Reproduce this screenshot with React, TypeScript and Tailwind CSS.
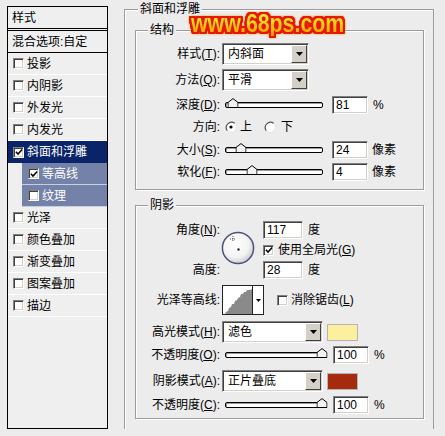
import React from "react";

const effects = [
  { name: "投影" },
  { name: "内阴影" },
  { name: "外发光" },
  { name: "内发光" },
  { name: "斜面和浮雕", on: true, active: true },
  { name: "等高线", on: true, sub: true },
  { name: "纹理", sub: true },
  { name: "光泽" },
  { name: "颜色叠加" },
  { name: "渐变叠加" },
  { name: "图案叠加" },
  { name: "描边" },
];

const sunken =
  "border border-[#808080] border-b-white border-r-white shadow-[inset_1px_1px_0_#404040,inset_-1px_-1px_0_#d4d0c8]";

function Key({ k }: { k: string }) {
  return <span className="underline decoration-1 underline-offset-[1px]">{k}</span>;
}

function Lbl({ name, k }: { name: string; k?: string }) {
  return (
    <span className="w-[84px] shrink-0 text-right whitespace-nowrap">
      {name}
      {k ? (
        <>
          (<Key k={k} />)
        </>
      ) : null}
      :
    </span>
  );
}

function Check({ on = false }: { on?: boolean }) {
  return (
    <span className={`flex h-[11px] w-[11px] shrink-0 items-center justify-center bg-white ${sunken}`}>
      {on && (
        <svg viewBox="0 0 9 9" className="h-[8px] w-[8px]">
          <path d="M1 4.2 L3.4 6.8 L8 1.6" stroke="#000" strokeWidth="1.7" fill="none" />
        </svg>
      )}
    </span>
  );
}

function Radio({ on = false }: { on?: boolean }) {
  return (
    <svg viewBox="0 0 12 12" className="h-[12px] w-[12px] shrink-0">
      <circle cx="6" cy="6" r="5.3" fill="#fff" stroke="#e6e6e6" />
      <path d="M2.3 9.7 A5.3 5.3 0 0 1 9.7 2.3" stroke="#555" strokeWidth="1.2" fill="none" />
      {on && <circle cx="6" cy="6" r="1.6" fill="#000" />}
    </svg>
  );
}

function Select({ value, wide = false }: { value: string; wide?: boolean }) {
  return (
    <div className={`ml-[2px] flex h-[22px] items-center bg-white ${sunken} ${wide ? "w-[101px]" : "w-[87px]"}`}>
      <span className="flex-1 pl-[5px]">{value}</span>
      <span className="mr-[1px] flex h-[18px] w-[16px] items-center justify-center border border-white border-b-[#404040] border-r-[#404040] bg-[#d4d0c8]">
        <svg viewBox="0 0 7 4" className="h-[4px] w-[7px]">
          <path d="M0 0 H7 L3.5 4 Z" fill="#000" />
        </svg>
      </span>
    </div>
  );
}

function Slider({ value }: { value: number }) {
  return (
    <div className="relative ml-[5px] h-[6px] w-[98px] shrink-0 rounded-[2px] border border-black bg-white shadow-[inset_1px_1px_0_#9a9a9a]">
      <svg
        viewBox="0 0 11 10"
        className="absolute top-[-5px] h-[10px] w-[11px] -translate-x-1/2"
        style={{ left: `${value}%` }}
      >
        <path d="M0.5 9.5 V4.5 L5.5 0.6 L10.5 4.5 V9.5 Z" fill="#f2f2f2" stroke="#000" />
      </svg>
    </div>
  );
}

function Field({ value, className = "" }: { value: string; className?: string }) {
  return (
    <span className={`flex h-[18px] items-center bg-white pl-[3px] ${sunken} ${className}`}>{value}</span>
  );
}

function Group({
  title,
  className,
  children,
}: {
  title: string;
  className: string;
  children: React.ReactNode;
}) {
  return (
    <div
      className={`relative flex flex-col border border-[#9c9c9c] shadow-[inset_1px_1px_0_#fff,1px_1px_0_#fff] ${className}`}
    >
      <span className="absolute left-[12px] top-[-8px] h-[14px] bg-[#ececec] px-[2px] leading-[14px]">{title}</span>
      {children}
    </div>
  );
}

function Dial() {
  return (
    <svg viewBox="0 0 34 34" className="ml-[1px] mt-[10px] h-[34px] w-[34px] shrink-0">
      <defs>
        <radialGradient id="dialFill" cx="42%" cy="38%" r="65%">
          <stop offset="0" stopColor="#ffffff" />
          <stop offset="0.65" stopColor="#f3f3f3" />
          <stop offset="1" stopColor="#c9c9cf" />
        </radialGradient>
      </defs>
      <circle cx="17" cy="17" r="15.6" fill="url(#dialFill)" stroke="#48527a" strokeWidth="1.5" />
      <path d="M12 5 V11 M9 8 H15" stroke="#000" strokeWidth="0.7" strokeDasharray="1 1" />
      <rect x="16.5" y="17.5" width="2" height="2" fill="#000" />
    </svg>
  );
}

function Contour() {
  return (
    <div className="ml-[2px] flex h-[30px] w-[42px] shrink-0 border border-[#222] bg-white">
      <svg viewBox="0 0 29 28" className="h-[28px] w-[29px]">
        <path
          d="M2 28 L3 26 L5 25 L6 22 L8 21 L9 18 L11 18 L12 15 L14 14 L15 12 L17 11 L18 8 L20 8 L21 6 L23 6 L24 4 L27 4 L29 3 V28 Z"
          fill="#8a8a8a"
        />
      </svg>
      <span className="flex flex-1 items-center justify-center border-l border-[#222]">
        <svg viewBox="0 0 5 3" className="h-[3px] w-[5px]">
          <path d="M0 0 H5 L2.5 3 Z" fill="#000" />
        </svg>
      </span>
    </div>
  );
}

function StylesList() {
  return (
    <div className="flex h-[423px] w-[101px] shrink-0 flex-col border border-black bg-[#efefef]">
      <div className="flex h-[24px] items-center border-b-[3px] border-double border-black pl-[4px]">样式</div>
      <div className="flex h-[22px] items-center border-b border-black pl-[4px]">混合选项:自定</div>
      {effects.map((e) =>
        e.sub ? (
          <div key={e.name} className="pl-[14px]">
            <div className="flex h-[22px] items-center gap-[3px] border-b border-[#c9cde0] bg-[#7481a9] pl-[6px] text-white">
              <Check on={e.on} />
              <span>{e.name}</span>
            </div>
          </div>
        ) : (
          <div
            key={e.name}
            className={`flex h-[22px] items-center gap-[3px] pl-[5px] ${
              e.active ? "bg-[#0a246a] text-white" : "border-b border-white"
            }`}
          >
            <Check on={e.on} />
            <span>{e.name}</span>
          </div>
        )
      )}
    </div>
  );
}

function BevelPanel() {
  return (
    <div className="relative mt-[3px] flex h-[420px] w-[310px] shrink-0 flex-col border border-b-0 border-[#9c9c9c] pl-[10px] pr-[9px] pt-[20px] shadow-[inset_1px_1px_0_#fff]">
      <span className="absolute left-[13px] top-[-8px] h-[14px] bg-[#ececec] px-[2px] leading-[14px]">斜面和浮雕</span>

      <Group title="结构" className="h-[160px] pt-[12px]">
        <div className="flex h-[22px] items-center">
          <Lbl name="样式" k="T" />
          <Select value="内斜面" />
        </div>
        <div className="mt-[4px] flex h-[22px] items-center">
          <Lbl name="方法" k="Q" />
          <Select value="平滑" />
        </div>
        <div className="mt-[3px] flex h-[22px] items-center">
          <Lbl name="深度" k="D" />
          <Slider value={7} />
          <Field value="81" className="ml-[9px] w-[36px]" />
          <span className="ml-[5px]">%</span>
        </div>
        <div className="flex h-[22px] items-center">
          <Lbl name="方向" />
          <span className="ml-[5px] flex items-center">
            <Radio on />
            <span className="ml-[3px]">上</span>
          </span>
          <span className="ml-[12px] flex items-center">
            <Radio />
            <span className="ml-[5px]">下</span>
          </span>
        </div>
        <div className="mt-[1px] flex h-[22px] items-center">
          <Lbl name="大小" k="S" />
          <Slider value={16} />
          <Field value="24" className="ml-[9px] w-[36px]" />
          <span className="ml-[4px]">像素</span>
        </div>
        <div className="flex h-[22px] items-center">
          <Lbl name="软化" k="F" />
          <Slider value={27} />
          <Field value="4" className="ml-[9px] w-[36px]" />
          <span className="ml-[4px]">像素</span>
        </div>
      </Group>

      <Group title="阴影" className="mt-[15px] h-[214px] pt-[15px]">
        <div className="flex">
          <div className="flex h-[56px] w-[84px] shrink-0 flex-col items-end justify-between pb-[1px] pt-[3px]">
            <span>
              角度(<Key k="N" />):
            </span>
            <span>高度:</span>
          </div>
          <Dial />
          <div className="ml-[8px] flex flex-col">
            <div className="flex items-center">
              <Field value="117" className="h-[17px] w-[40px]" />
              <span className="ml-[5px]">度</span>
            </div>
            <div className="flex h-[22px] items-center">
              <Check on />
              <span className="ml-[4px]">
                使用全局光(<Key k="G" />)
              </span>
            </div>
            <div className="flex items-center">
              <Field value="28" className="h-[17px] w-[40px]" />
              <span className="ml-[5px]">度</span>
            </div>
          </div>
        </div>
        <div className="mt-[6px] flex h-[30px] items-center">
          <Lbl name="光泽等高线" />
          <Contour />
          <span className="ml-[13px] flex items-center">
            <Check />
            <span className="ml-[3px]">
              消除锯齿(<Key k="L" />)
            </span>
          </span>
        </div>
        <div className="mt-[6px] flex h-[22px] items-center">
          <Lbl name="高光模式" k="H" />
          <Select value="滤色" wide />
          <span className="ml-[4px] h-[17px] w-[31px] border border-[#b5b5b5] bg-[#fcf0a0]" />
        </div>
        <div className="mt-[1px] flex h-[22px] items-center">
          <Lbl name="不透明度" k="O" />
          <Slider value={100} />
          <Field value="100" className="ml-[10px] w-[36px]" />
          <span className="ml-[5px]">%</span>
        </div>
        <div className="mt-[4px] flex h-[22px] items-center">
          <Lbl name="阴影模式" k="A" />
          <Select value="正片叠底" wide />
          <span className="ml-[4px] h-[17px] w-[31px] border border-[#b5b5b5] bg-[#a52a0e]" />
        </div>
        <div className="mt-[2px] flex h-[22px] items-center">
          <Lbl name="不透明度" k="C" />
          <Slider value={100} />
          <Field value="100" className="ml-[10px] w-[36px]" />
          <span className="ml-[5px]">%</span>
        </div>
      </Group>
    </div>
  );
}

function Watermark() {
  return (
    <div className="absolute left-[191px] top-[10px] [filter:drop-shadow(1px_0_0_#e41a00)_drop-shadow(-1px_0_0_#e41a00)_drop-shadow(0_1px_0_#e41a00)_drop-shadow(0_-1px_0_#e41a00)_drop-shadow(1px_0_0_#e41a00)_drop-shadow(-1px_0_0_#e41a00)_drop-shadow(0_1px_0_#e41a00)_drop-shadow(0_-1px_0_#e41a00)_drop-shadow(0_0_1px_#ff9a40)]">
      <span className="block origin-left scale-x-[0.82] bg-gradient-to-b from-[#fff23a] via-[#ffd21a] to-[#ff9a00] bg-clip-text font-['Liberation_Sans',sans-serif] text-[26px] leading-none font-bold whitespace-nowrap text-transparent">
        www.68ps.com
      </span>
    </div>
  );
}

export default function App() {
  return (
    <div className="relative flex h-[436px] w-[445px] items-start gap-[16px] overflow-hidden bg-[#ececec] pl-[7px] pt-[6px] font-['Liberation_Sans','Noto_Sans_CJK_SC',sans-serif] text-[12px] leading-none text-black">
      <StylesList />
      <BevelPanel />
      <Watermark />
    </div>
  );
}
